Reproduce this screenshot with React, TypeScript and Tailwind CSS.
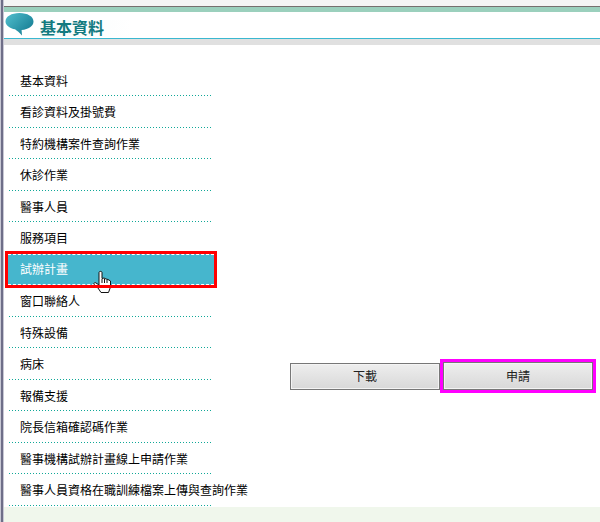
const MENU = [
  "基本資料",
  "看診資料及掛號費",
  "特約機構案件查詢作業",
  "休診作業",
  "醫事人員",
  "服務項目",
  "試辦計畫",
  "窗口聯絡人",
  "特殊設備",
  "病床",
  "報備支援",
  "院長信箱確認碼作業",
  "醫事機構試辦計畫線上申請作業",
  "醫事人員資格在職訓練檔案上傳與查詢作業",
];

const FONT = "font-['Liberation_Sans','Noto_Sans_CJK_TC',sans-serif]";

function Bubble() {
  return (
    <svg width="29" height="24" viewBox="0 0 29 24" className="shrink-0">
      <defs>
        <linearGradient id="bubble" x1="0" y1="0.1" x2="1" y2="0.9">
          <stop offset="0" stopColor="#4fbccb" />
          <stop offset="1" stopColor="#11788f" />
        </linearGradient>
      </defs>
      <path
        d="M14.5 1C6.5 1 .5 4.5 .5 9.5 .5 13.5 5 16.5 10 17.3 12 18.5 14.5 21 17 23.5L16.6 18C23.5 17.4 28.5 14 28.5 9.5 28.5 4.5 22.5 1 14.5 1Z"
        fill="url(#bubble)"
      />
    </svg>
  );
}

function HandCursor() {
  return (
    <svg
      width="19"
      height="24"
      viewBox="0 0 19 24"
      className="absolute left-[88px] top-[19px]"
    >
      <path
        d="M6 2.5C6 1 9 1 9 2.5V8.5L11 8 13 9 15 9.5 17.5 11V17L15.5 22.5H8L5 18 1 14.5C.5 13 2 12 3 13L6 15Z"
        fill="#fff"
        stroke="#111"
        strokeWidth="1"
      />
      <path d="M9 9V13M11.5 9V13M14 10V13" stroke="#111" strokeWidth="1" fill="none" />
    </svg>
  );
}

function MenuRow({ label, active }: { label: string; active: boolean }) {
  if (active) {
    return (
      <li className="relative -my-[3px] -ml-[4px] h-[37.54px] w-[212px] p-[3px]">
        <div className="flex h-full items-center border-y border-dashed border-white bg-[#46b6cd] pl-[12px] pt-px text-white">
          {label}
        </div>
        <HandCursor />
        <div className="absolute inset-0 border-[3px] border-[#ff0000]" />
      </li>
    );
  }
  return (
    <li className="flex h-[31.54px] w-[203px] items-center whitespace-nowrap bg-[repeating-linear-gradient(90deg,#10a898_0,#10a898_1px,transparent_1px,transparent_3px)] bg-[length:100%_1px] bg-bottom bg-no-repeat pl-[11px] pt-[2.5px] text-black">
      {label}
    </li>
  );
}

export default function App() {
  return (
    <div className={`${FONT} flex h-[522px] w-[600px] overflow-hidden bg-white text-[12px]`}>
      <div className="w-[4px] shrink-0 border-x border-[#c8c8d4] bg-[#6e6e88]" />
      <div className="flex min-w-0 flex-1 flex-col">
        <div className="h-[6px] bg-[#f5f5f5]" />
        <div className="h-px bg-[#77706f]" />
        <div className="h-[5px] bg-[#9bd0bd]" />
        <div className="flex h-[26px] items-start gap-[6px] pl-[1px]">
          <Bubble />
          <span className="mt-[8px] bg-gradient-to-r from-[#f4fbfb] to-white pr-[28px] text-[16px] leading-[17px] font-bold text-[#127a80]">
            基本資料
          </span>
        </div>
        <div className="h-px bg-[#3ab8d0]" />
        <div className="h-[6px] bg-[#e0e0e0]" />
        <div className="flex flex-1">
          <ul className="ml-[5px] mt-[19.5px] flex w-[202px] shrink-0 flex-col">
            {MENU.map((label) => (
              <MenuRow key={label} label={label} active={label === "試辦計畫"} />
            ))}
          </ul>
          <div className="ml-[79px] mt-[318px] flex items-start">
            <button className="h-[27px] w-[150px] border border-[#777] bg-gradient-to-b from-[#eeeeee] to-[#d8d8d8] pt-px text-[12px] text-[#222] shadow-[inset_0_0_0_1px_#f4f4f4]">
              下載
            </button>
            <div className="-mt-[4px] border-[3px] border-[#ff00ff]">
              <button className="block h-[28px] w-[150px] border border-[#777] bg-gradient-to-b from-[#eeeeee] to-[#d8d8d8] pt-[2px] text-[12px] text-[#222] shadow-[inset_0_0_0_1px_#f4f4f4]">
                申請
              </button>
            </div>
          </div>
        </div>
        <div className="h-[15px] bg-[#f0f7ec]" />
      </div>
    </div>
  );
}
